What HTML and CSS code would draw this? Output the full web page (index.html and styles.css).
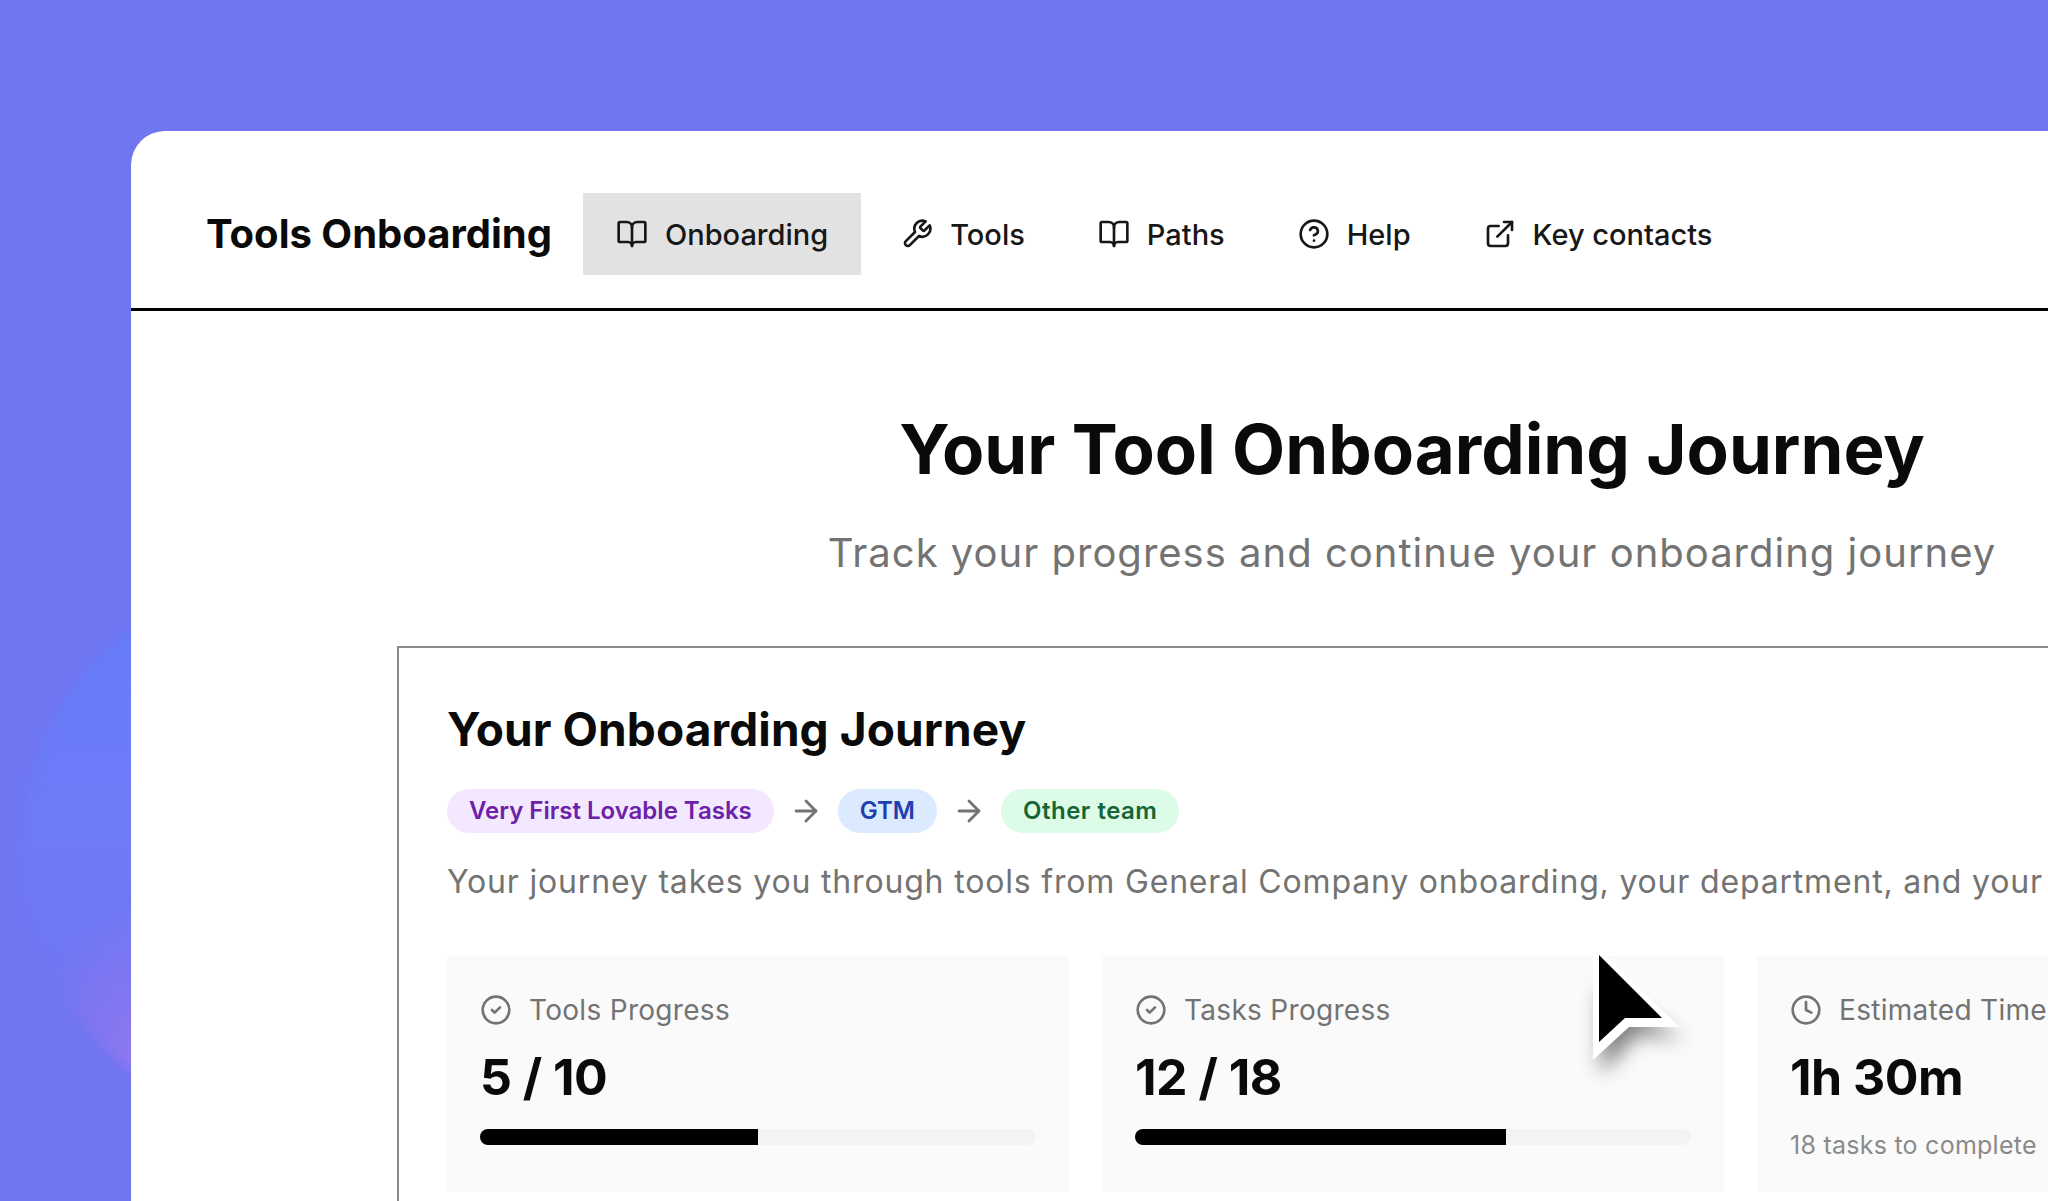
FILE: index.html
```html
<!DOCTYPE html>
<html lang="en">
<head>
    <meta charset="UTF-8">
    <meta name="viewport" content="width=device-width, initial-scale=1.0">
    <title>Tools Onboarding</title>
    <link rel="stylesheet" href="styles.css">
</head>
<body>
    <svg class="icon-defs" aria-hidden="true">
        <symbol id="i-book" viewBox="0 0 24 24"><path d="M12 7v14"/><path d="M3 18a1 1 0 0 1-1-1V4a1 1 0 0 1 1-1h5a4 4 0 0 1 4 4 4 4 0 0 1 4-4h5a1 1 0 0 1 1 1v13a1 1 0 0 1-1 1h-6a3 3 0 0 0-3 3 3 3 0 0 0-3-3z"/></symbol>
        <symbol id="i-wrench" viewBox="0 0 24 24"><path d="M14.7 6.3a1 1 0 0 0 0 1.4l1.6 1.6a1 1 0 0 0 1.4 0l3.77-3.77a6 6 0 0 1-7.94 7.94l-6.91 6.91a2.12 2.12 0 0 1-3-3l6.91-6.91a6 6 0 0 1 7.94-7.94l-3.76 3.76z"/></symbol>
        <symbol id="i-help" viewBox="0 0 24 24"><circle cx="12" cy="12" r="10"/><path d="M9.09 9a3 3 0 0 1 5.83 1c0 2-3 3-3 3"/><path d="M12 17h.01"/></symbol>
        <symbol id="i-link" viewBox="0 0 24 24"><path d="M15 3h6v6"/><path d="M10 14 21 3"/><path d="M18 13v6a2 2 0 0 1-2 2H5a2 2 0 0 1-2-2V8a2 2 0 0 1 2-2h6"/></symbol>
        <symbol id="i-check" viewBox="0 0 24 24"><circle cx="12" cy="12" r="10"/><path d="m9 12 2 2 4-4"/></symbol>
        <symbol id="i-clock" viewBox="0 0 24 24"><circle cx="12" cy="12" r="10"/><path d="M12 6v6l4 2"/></symbol>
        <symbol id="i-arrow" viewBox="0 0 24 24"><path d="M5 12h14"/><path d="m12 5 7 7-7 7"/></symbol>
    </svg>

    <div class="glow"></div>

    <div class="window">
        <header class="topbar">
            <div class="brand">Tools Onboarding</div>
            <nav class="nav">
                <a class="nav-item active"><svg class="nav-icon"><use href="#i-book"/></svg>Onboarding</a>
                <a class="nav-item"><svg class="nav-icon"><use href="#i-wrench"/></svg>Tools</a>
                <a class="nav-item"><svg class="nav-icon"><use href="#i-book"/></svg>Paths</a>
                <a class="nav-item"><svg class="nav-icon"><use href="#i-help"/></svg>Help</a>
                <a class="nav-item"><svg class="nav-icon"><use href="#i-link"/></svg>Key contacts</a>
            </nav>
        </header>

        <main class="content">
            <h1>Your Tool Onboarding Journey</h1>
            <p class="subtitle">Track your progress and continue your onboarding journey</p>

            <section class="journey-card">
                <h2>Your Onboarding Journey</h2>
                <div class="chips">
                    <span class="chip chip-purple">Very First Lovable Tasks</span>
                    <svg class="chip-arrow"><use href="#i-arrow"/></svg>
                    <span class="chip chip-blue">GTM</span>
                    <svg class="chip-arrow"><use href="#i-arrow"/></svg>
                    <span class="chip chip-green">Other team</span>
                </div>
                <p class="journey-text">Your journey takes you through tools from General Company onboarding, your department, and your</p>

                <div class="stats">
                    <div class="stat">
                        <div class="stat-label"><svg class="stat-icon"><use href="#i-check"/></svg>Tools Progress</div>
                        <div class="stat-value">5 / 10</div>
                        <div class="bar"><div class="bar-fill" style="width: 50%"></div></div>
                    </div>
                    <div class="stat">
                        <div class="stat-label"><svg class="stat-icon"><use href="#i-check"/></svg>Tasks Progress</div>
                        <div class="stat-value">12 / 18</div>
                        <div class="bar"><div class="bar-fill" style="width: 66.7%"></div></div>
                    </div>
                    <div class="stat">
                        <div class="stat-label"><svg class="stat-icon"><use href="#i-clock"/></svg>Estimated Time</div>
                        <div class="stat-value">1h 30m</div>
                        <div class="stat-note">18 tasks to complete</div>
                    </div>
                </div>
            </section>
        </main>
    </div>

    <!-- pointer drawn over the screenshot -->
    <svg class="cursor" viewBox="0 0 110 130">
        <defs>
            <filter id="cursorShadow" x="-40%" y="-40%" width="200%" height="200%">
                <feGaussianBlur stdDeviation="10"/>
            </filter>
        </defs>
        <path d="M14 40 L14 125 L50 85 L95 90 Z" fill="#000" opacity="0.5" filter="url(#cursorShadow)"/>
        <path d="M6 -5 L6 111 L42 78 L93 78 Z" fill="#fff"/>
        <path d="M12 6 L12 93 L38 69 L75 69 Z" fill="#000"/>
    </svg>
</body>
</html>
```

FILE: styles.css
```css
* {
    box-sizing: border-box;
}

html, body {
    height: 100%;
}

body {
    margin: 0;
    overflow: hidden;
    font-family: Inter, "Liberation Sans", sans-serif;
    color: #0a0a0a;
    padding: 131px 0 0 131px;
    background-color: #7075f0;
}

.icon-defs {
    display: none;
}

/* blue-to-purple blob behind the window */
.glow {
    position: absolute;
    left: 20px;
    top: 580px;
    width: 520px;
    height: 540px;
    border-radius: 50%;
    background:
        radial-gradient(ellipse 110px 170px at 120px 490px, #9078f0 0%, rgba(144, 120, 240, 0) 100%),
        linear-gradient(180deg, #667cf9 8%, #6f7bf7 45%, rgba(112, 117, 240, 0) 82%);
    filter: blur(6px);
}

.window {
    position: relative;
    width: 2562px;
    height: 1400px;
    background-color: #fff;
    border-top-left-radius: 34px;
}

.topbar {
    display: flex;
    align-items: flex-start;
    height: 180px;
    padding: 62px 0 0 75px;
    border-bottom: 3px solid #000;
}

.brand {
    font-size: 40px;
    line-height: 82px;
    font-weight: 700;
    width: 377px;
    white-space: nowrap;
}

.nav {
    display: flex;
    gap: 7px;
}

.nav-item {
    display: flex;
    align-items: center;
    gap: 17px;
    height: 82px;
    padding: 0 33px;
    font-size: 29px;
    font-weight: 500;
    color: #171717;
}

.nav-item.active {
    background-color: #e2e2e2;
}

.nav-icon {
    width: 32px;
    height: 32px;
    fill: none;
    stroke: currentColor;
    stroke-width: 2;
    stroke-linecap: round;
    stroke-linejoin: round;
}

.content {
    display: flex;
    flex-direction: column;
    align-items: center;
    padding-top: 98px;
}

h1 {
    margin: 0;
    font-size: 69px;
    line-height: 80px;
    font-weight: 700;
}

.subtitle {
    margin: 40px 0 0;
    font-size: 40px;
    line-height: 48px;
    letter-spacing: 1px;
    color: #737373;
}

.journey-card {
    width: 2030px;
    margin-top: 69px;
    padding: 51px 46px 48px 48px;
    border: 2px solid #8a8a8a;
}

h2 {
    margin: 0;
    font-size: 46px;
    line-height: 60px;
    font-weight: 700;
    letter-spacing: 0.1px;
}

.chips {
    display: flex;
    align-items: center;
    gap: 15px;
    margin-top: 30px;
}

.chip {
    display: block;
    height: 44px;
    line-height: 44px;
    padding: 0 22px;
    border-radius: 22px;
    font-size: 24px;
    font-weight: 600;
}

.chip-purple {
    background-color: #f3e8ff;
    color: #6b21a8;
}

.chip-blue {
    background-color: #dbeafe;
    color: #1e40af;
}

.chip-green {
    background-color: #dcfce7;
    color: #166534;
    letter-spacing: 0.5px;
}

.chip-arrow {
    width: 34px;
    height: 34px;
    fill: none;
    stroke: #737373;
    stroke-width: 2;
    stroke-linecap: round;
    stroke-linejoin: round;
}

.journey-text {
    margin: 27px 0 0;
    font-size: 32px;
    line-height: 44px;
    letter-spacing: 0.82px;
    color: #737373;
    white-space: nowrap;
}

.stats {
    display: grid;
    grid-template-columns: repeat(3, 1fr);
    gap: 33px;
    margin-top: 52px;
}

.stat {
    height: 236px;
    padding: 34px 33px 33px;
    background-color: #fafafa;
}

.stat-label {
    display: flex;
    align-items: center;
    gap: 17px;
    height: 40px;
    font-size: 28px;
    letter-spacing: 0.3px;
    color: #737373;
}

.stat-icon {
    width: 32px;
    height: 32px;
    fill: none;
    stroke: currentColor;
    stroke-width: 2;
    stroke-linecap: round;
    stroke-linejoin: round;
}

.stat-value {
    margin-top: 15px;
    font-size: 50px;
    line-height: 64px;
    font-weight: 700;
    letter-spacing: -0.5px;
}

.bar {
    height: 16px;
    margin-top: 20px;
    background-color: #f3f3f3;
    border-radius: 9px;
    overflow: hidden;
}

.bar-fill {
    height: 100%;
    background-color: #000;
}

.stat-note {
    margin-top: 21px;
    font-size: 25px;
    line-height: 30px;
    letter-spacing: 0.25px;
    color: #8a8a8a;
}

.cursor {
    position: absolute;
    left: 1587px;
    top: 949px;
    width: 110px;
    height: 130px;
    overflow: visible;
}
```
